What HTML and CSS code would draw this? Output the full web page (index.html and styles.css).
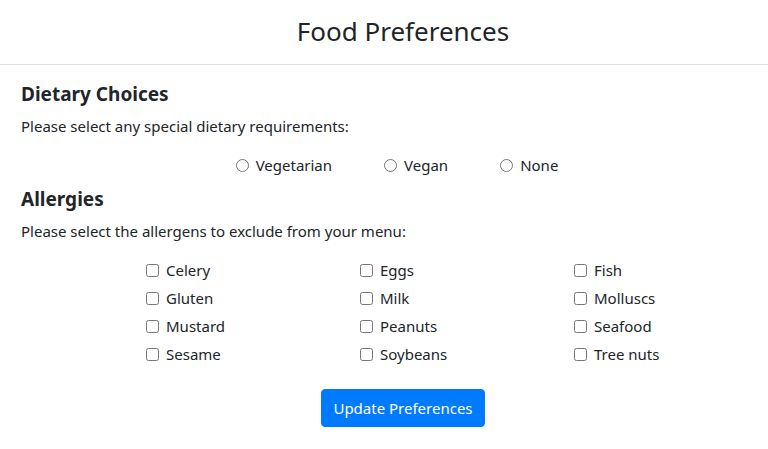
FILE: index.html
```html
<!DOCTYPE html>
<html lang="en">
<head>
<meta charset="utf-8">
<title>Food Preferences</title>
<link rel="stylesheet" href="styles.css">
</head>
<body>
<header class="topbar">
  <h1 class="title">Food Preferences</h1>
</header>
<main class="content">
  <section class="section">
    <h2 class="heading">Dietary Choices</h2>
    <p class="lead">Please select any special dietary requirements:</p>
    <div class="radios">
      <label class="choice"><input type="radio" name="diet"> Vegetarian</label>
      <label class="choice"><input type="radio" name="diet"> Vegan</label>
      <label class="choice"><input type="radio" name="diet"> None</label>
    </div>
  </section>
  <section class="section">
    <h2 class="heading">Allergies</h2>
    <p class="lead">Please select the allergens to exclude from your menu:</p>
    <div class="checks">
      <label class="check"><input type="checkbox"> Celery</label>
      <label class="check"><input type="checkbox"> Eggs</label>
      <label class="check"><input type="checkbox"> Fish</label>
      <label class="check"><input type="checkbox"> Gluten</label>
      <label class="check"><input type="checkbox"> Milk</label>
      <label class="check"><input type="checkbox"> Molluscs</label>
      <label class="check"><input type="checkbox"> Mustard</label>
      <label class="check"><input type="checkbox"> Peanuts</label>
      <label class="check"><input type="checkbox"> Seafood</label>
      <label class="check"><input type="checkbox"> Sesame</label>
      <label class="check"><input type="checkbox"> Soybeans</label>
      <label class="check"><input type="checkbox"> Tree nuts</label>
    </div>
  </section>
  <div class="actions">
    <button class="btn" type="button">Update Preferences</button>
  </div>
</main>
</body>
</html>
```
FILE: styles.css
```css
html, body {
  margin: 0;
  padding: 0;
  background: #fff;
}
body {
  font-family: "Noto Sans", "Liberation Sans", sans-serif;
  color: #212529;
  font-size: 15px;
}
.topbar {
  height: 64px;
  border-bottom: 1px solid #dee2e6;
  display: flex;
  align-items: center;
  justify-content: center;
  padding-left: 38px;
}
.title {
  margin: 0;
  font-size: 26px;
  font-weight: 400;
  line-height: 1.2;
}
.content {
  padding: 13px 21px 0;
}
.heading {
  margin: 0;
  font-size: 19px;
  font-weight: 700;
  line-height: 32px;
}
.lead {
  margin: 0;
  line-height: 32px;
}
.radios {
  display: flex;
  justify-content: center;
  gap: 52px;
  padding-left: 26px;
  padding-top: 5px;
  height: 36px;
  align-items: center;
}
.choice, .check {
  display: flex;
  align-items: center;
  gap: 4px;
}
.choice input, .check input {
  margin: 0 3px 0 0;
  width: 13px;
  height: 13px;
}
.checks {
  display: grid;
  grid-template-columns: repeat(3, 214px);
  grid-auto-rows: 28px;
  padding-left: 125px;
  padding-top: 9px;
  align-items: center;
}
.actions {
  display: flex;
  justify-content: center;
  padding-top: 21px;
  padding-left: 38px;
}
.btn {
  font-family: inherit;
  font-size: 15px;
  color: #fff;
  background: #007bff;
  border: 1px solid #007bff;
  border-radius: 4px;
  height: 38px;
  padding: 0 11px;
  line-height: 1.5;
}
```
